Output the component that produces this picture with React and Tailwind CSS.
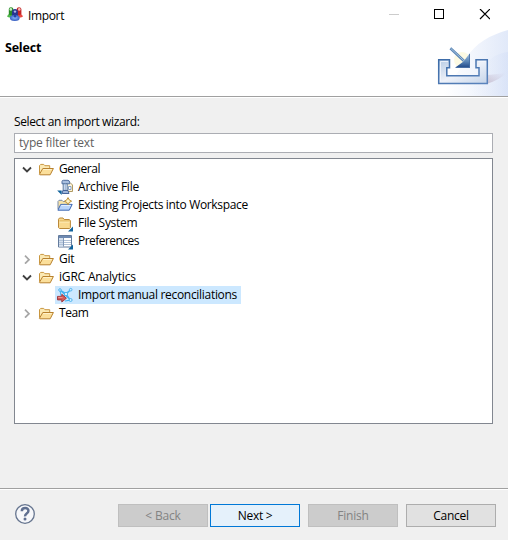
import React from "react";

const AppIcon = () => (
  <svg width="16" height="16" viewBox="0 0 16 16">
    <defs>
      <radialGradient id="blueBody" cx="0.5" cy="0.45" r="0.6">
        <stop offset="0" stopColor="#8dbaff" />
        <stop offset="1" stopColor="#2a50b8" />
      </radialGradient>
    </defs>
    <path d="M0 9.6Q.6 7.4 3 6.3L5.5 6 7 10.5 2 10.4z" fill="#4fb84a" />
    <path d="M16 9.6Q15.4 7.4 13 6.3L10.5 6 9 10.5 14 10.4z" fill="#ea4a42" />
    <path d="M1.8 7.4V2Q1.8.2 4 .2T6.3 2v5L4 8.6z" fill="#278a26" />
    <path d="M9.7 7V2Q9.9.2 12 .2T14.4 2v5L12 8.6z" fill="#c22427" />
    <circle cx="3.8" cy="2.4" r="1.3" fill="#c5efbf" />
    <circle cx="12.3" cy="2.4" r="1.3" fill="#f7bdb6" />
    <path d="M5 9V4.4Q5.4 2 8 2t2.9 2.4V9z" fill="#28348f" />
    <circle cx="8" cy="4.6" r="1.2" fill="#aab6ea" />
    <ellipse cx="7.8" cy="11" rx="4.9" ry="3" fill="url(#blueBody)" />
    <path d="M7 7.5h2l.4 2.3-1.4 1-1.4-1z" fill="#2642a8" />
  </svg>
);

const Banner = () => (
  <svg width="78" height="67" viewBox="430 29 78 67" className="block">
    <defs>
      <linearGradient id="sky" gradientUnits="userSpaceOnUse" x1="444" y1="62" x2="508" y2="62">
        <stop offset="0" stopColor="#fff" />
        <stop offset=".4" stopColor="#f4f7fd" />
        <stop offset="1" stopColor="#e1e9f9" />
      </linearGradient>
      <linearGradient id="sky2" gradientUnits="userSpaceOnUse" x1="470" y1="70" x2="508" y2="70">
        <stop offset="0" stopColor="#e9effb" stopOpacity="0" />
        <stop offset="1" stopColor="#cfdbf5" />
      </linearGradient>
      <linearGradient id="tray" x1="0" y1="0" x2="1" y2="1">
        <stop offset="0" stopColor="#b7cbe4" />
        <stop offset=".5" stopColor="#edf1f9" />
        <stop offset="1" stopColor="#c5d4e9" />
      </linearGradient>
      <linearGradient id="edge" x1="0" y1="0" x2="1" y2="1">
        <stop offset="0" stopColor="#3d6ca8" />
        <stop offset="1" stopColor="#5b84bd" />
      </linearGradient>
      <linearGradient id="head" x1="0" y1="0" x2="0" y2="1">
        <stop offset="0" stopColor="#a7c2df" />
        <stop offset=".55" stopColor="#5e89ba" />
        <stop offset="1" stopColor="#1c4687" />
      </linearGradient>
      <linearGradient id="shadow" x1="0" y1="1" x2="1" y2="0">
        <stop offset="0" stopColor="#b9a9bb" stopOpacity=".7" />
        <stop offset="1" stopColor="#c9c4dc" stopOpacity="0" />
      </linearGradient>
    </defs>
    <path d="M508 30C490 35 476 43 466 58C460 69 450 86 438 96H508z" fill="url(#sky)" />
    <path d="M508 52C491 54 478 66 470 96H508z" fill="url(#sky2)" opacity=".4" />
    <path d="M488 75L506 73Q500 80 486 84z" fill="url(#shadow)" />
    <circle cx="462" cy="60" r="8" fill="#fcf9dc" opacity=".8" />
    <path
      d="M438.7 59.7H449.5V67.8H446.8V75.8H479V67.8H476V59.7H487.3V83.4H438.7z"
      fill="url(#tray)"
      stroke="url(#edge)"
      strokeWidth="1.5"
    />
    <path d="M440.5 61.5H448M440.5 61.5V81.5M478 61.5H485.5" stroke="#f5f8fd" fill="none" opacity=".8" />
    <path d="M450.4 48.2L464 61" stroke="#5a86b6" strokeWidth="2.6" />
    <path d="M450.6 48.3L464 60.8" stroke="#a8c3de" strokeWidth="1" />
    <path d="M470 53V67.8H455L463.5 61.5z" fill="url(#head)" />
    <path d="M469.5 54V67.4H456" stroke="#456fa5" strokeWidth=".8" fill="none" />
  </svg>
);

const FolderOpen = () => (
  <svg width="16" height="16" viewBox="0 0 16 16">
    <path d="M1.5 12.5V4.6L2.7 3.4H5.7L6.9 4.7H11.7V7.4" fill="#fbe9b4" stroke="#c9963f" />
    <path d="M1.4 13.4L4.8 7.5H15.4L12.2 13.8H1.8z" fill="#fbdf9b" stroke="#b8812e" strokeLinejoin="round" />
    <path d="M5.2 8.5H13.8" stroke="#fff1c9" />
  </svg>
);

const Corner = () => <path d="M16 11.5v5h-5z" fill="#12639c" />;

const ArchiveIcon = () => (
  <svg width="16" height="16" viewBox="0 0 16 16" className="overflow-visible">
    <path d="M9.5 3.5H13L15.5 6V12.5H9.5z" fill="#fdf3d8" stroke="#b09a62" />
    <path d="M11.5 7.5H14V10.5H11.5z" fill="#fff" stroke="#7895bd" strokeWidth=".9" />
    <path d="M5 4.8V2.5Q5 1.3 6.5 1.3H11Q12.7 1.6 12.7 3.6V4.8z" fill="#a9bfdf" stroke="#506f9f" />
    <path d="M6.2 4.8H10.2V11.4H6.2z" fill="#e7effa" stroke="#58779f" />
    <path d="M8.2 4.5V11.5" stroke="#8ca9d0" />
    <path d="M5.8 11.5H11L12 14.5H5.2z" fill="#9fb6d8" stroke="#46659a" />
    <path d="M.2 11.5H4.7V16z" fill="#12639c" />
  </svg>
);

const ProjectIcon = () => (
  <svg width="16" height="16" viewBox="0 0 16 16">
    <path d="M1 12V4.4L2 3.3H5L6.2 4.5H11V7" fill="#f7e3a8" stroke="#7b8cab" />
    <path d="M.9 13.2L3.7 7.4H15.2L12.3 13.2z" fill="#b9d4fa" stroke="#3e67b1" strokeLinejoin="round" />
    <path d="M4.3 8.4H13.6" stroke="#e8f2ff" />
    <path d="M11 .6L12.3 2.9 14.6 4.2 12.3 5.5 11 7.8 9.7 5.5 7.4 4.2 9.7 2.9z" fill="#f7df9c" stroke="#b58930" strokeWidth=".9" />
    <path d="M11 2.8V5.6M9.6 4.2H12.4" stroke="#fff8d8" />
  </svg>
);

const FileSystemIcon = () => (
  <svg width="16" height="16" viewBox="0 0 16 16" className="overflow-visible">
    <path d="M1.5 12.6V4.3L2.5 3H6L7.2 4.5H12L13.4 5.5V12.6L12.5 13.5H2.5z" fill="#f9d98f" stroke="#bb8939" />
    <path d="M2.5 7H12.5" stroke="#fff0c1" />
    <path d="M2.5 5.9H12.5" stroke="#dfb45c" />
    <Corner />
  </svg>
);

const PreferencesIcon = () => (
  <svg width="16" height="16" viewBox="0 0 16 16" className="overflow-visible">
    <path d="M1.5 2.5H14.5V14H1.5z" fill="#fff" stroke="#637b9d" />
    <path d="M2 3H14V5H2z" fill="#6e8ab2" />
    <path d="M2 5H6V13.5H2z" fill="#d4e0ef" />
    <path d="M2 7.5H14M2 9.5H14M2 11.5H14" stroke="#b2c2d7" />
    <path d="M6.5 5V13.5" stroke="#7f96b6" />
    <Corner />
  </svg>
);

const ReconIcon = () => (
  <svg width="16" height="16" viewBox="0 0 16 16">
    <path d="M3 3L13.5 13M14 2.5L5 11M3 3L9 6.5 14 2.5M9.3 7L13.5 13 8 14M3 3L4 9" fill="none" stroke="#45b3f2" strokeWidth="1.1" />
    <g fill="#d2efff" stroke="#45aeea" strokeWidth=".9">
      <circle cx="3" cy="3" r="1.3" />
      <circle cx="13.7" cy="2.7" r="1.3" />
      <circle cx="13.6" cy="13" r="1.5" />
      <circle cx="9" cy="7" r="1.7" />
    </g>
    <path d="M.5 9.4H4.8V7.3L9.4 11.2 4.8 15V12.9H.5z" fill="#d45a58" stroke="#9d3038" strokeWidth=".9" />
    <path d="M1.2 10.4H5.6" stroke="#ef9c94" />
  </svg>
);

const Chevron = ({ open }) => (
  <svg width="10" height="10" viewBox="0 0 10 10">
    {open ? (
      <path d="M1 3.5L5 7.5 9 3.5" fill="none" stroke="#404040" strokeWidth="1.8" />
    ) : (
      <path d="M3 1.7L7 5.7 3 9.7" fill="none" stroke="#a6a6a6" strokeWidth="1.7" />
    )}
  </svg>
);

const Group = ({ open, label, tracking, children }) => (
  <>
    <div className="flex h-[18px] items-center pl-[7px]">
      <Chevron open={open} />
      <span className="ml-[6px] mr-[5px]">
        <FolderOpen />
      </span>
      <span className={tracking}>{label}</span>
    </div>
    {children}
  </>
);

const Item = ({ icon, label, tracking, selected }) => (
  <div className="flex h-[18px] pl-[40px]">
    <div className={"flex h-[18px] items-center pl-[2px] " + (selected ? "w-[186px] bg-[#cce8ff]" : "")}>
      <span className="mr-[5px]">{icon}</span>
      <span className={tracking}>{label}</span>
    </div>
  </div>
);

const Button = ({ className, children }) => (
  <button className={"h-[23px] w-[90px] border leading-[21px] " + className}>{children}</button>
);

export default function App() {
  return (
    <div className="flex h-[540px] w-[508px] flex-col overflow-hidden bg-[#f0f0f0] font-['Open_Sans','Noto_Sans',sans-serif] text-[12px] leading-[18px] whitespace-nowrap text-black">
      <header className="h-[97px] shrink-0 border-b border-[#a0a0a0] bg-white">
        <div className="flex h-[29px] items-center pl-[7px] pr-[18px]">
          <AppIcon />
          <span className="ml-[5px] flex-1 pt-[2px] tracking-[-0.35px]">Import</span>
          <svg width="101" height="11" viewBox="0 0 101 11" shapeRendering="crispEdges" fill="none">
            <path d="M0 5.5H10" stroke="#ccc" />
            <path d="M45.5.5H54.5V9.5H45.5z" stroke="#000" />
            <path d="M91 0L101 10M101 0L91 10" stroke="#000" shapeRendering="auto" strokeWidth="1.2" />
          </svg>
        </div>
        <div className="flex justify-between">
          <h1 className="pl-[5px] pt-[10px] text-[12.5px] font-bold tracking-[-0.2px]">Select</h1>
          <Banner />
        </div>
      </header>
      <main className="flex-1 border-t border-white px-[14px] pt-[15px]">
        <label className="block tracking-[-0.37px]">Select an import wizard:</label>
        <div className="mt-[2px] h-[20px] w-[479px] border border-[#abadb3] bg-white pl-1 tracking-[-0.2px] text-[#606060]">
          type filter text
        </div>
        <div className="mt-[5px] h-[266px] w-[479px] border border-[#828790] bg-white pt-px">
          <Group open label="General" tracking="tracking-[-0.45px]">
            <Item icon={<ArchiveIcon />} label="Archive File" tracking="tracking-[-0.2px]" />
            <Item icon={<ProjectIcon />} label="Existing Projects into Workspace" tracking="tracking-[-0.34px]" />
            <Item icon={<FileSystemIcon />} label="File System" tracking="tracking-[-0.3px]" />
            <Item icon={<PreferencesIcon />} label="Preferences" tracking="tracking-[-0.55px]" />
          </Group>
          <Group label="Git" tracking="tracking-[-0.2px]" />
          <Group open label="iGRC Analytics" tracking="tracking-[-0.18px]">
            <Item selected icon={<ReconIcon />} label="Import manual reconciliations" tracking="tracking-[-0.3px]" />
          </Group>
          <Group label="Team" tracking="tracking-[-0.4px]" />
        </div>
      </main>
      <footer className="flex h-[52px] shrink-0 items-start border-t border-[#a0a0a0] pl-[14px] shadow-[inset_0_1px_0_#fff]">
        <svg width="22" height="22" viewBox="0 0 22 22" className="mt-[14px]">
          <circle cx="11" cy="11" r="9.3" fill="#f6f7fa" stroke="#66758f" strokeWidth="1.3" />
          <path d="M7.8 8.2Q7.9 5.1 11.2 5.1T14.4 8Q14.4 9.3 12.7 10.5T11.1 13.4" fill="none" stroke="#5f6f90" strokeWidth="2.5" />
          <circle cx="11" cy="16.1" r="1.5" fill="#5f6f90" />
        </svg>
        <div className="ml-[82px] mt-[15px] flex">
          <Button className="border-[#bfbfbf] bg-[#ccc] tracking-[-0.2px] text-[#838383]">&lt; Back</Button>
          <Button className="ml-[2px] border-[#0078d7] bg-[#e5f1fb] tracking-[-0.3px]">Next &gt;</Button>
          <Button className="ml-[8px] border-[#bfbfbf] bg-[#ccc] tracking-[-0.2px] text-[#838383]">Finish</Button>
          <Button className="ml-[8px] border-[#adadad] bg-[#e1e1e1] tracking-[-0.3px]">Cancel</Button>
        </div>
      </footer>
    </div>
  );
}
